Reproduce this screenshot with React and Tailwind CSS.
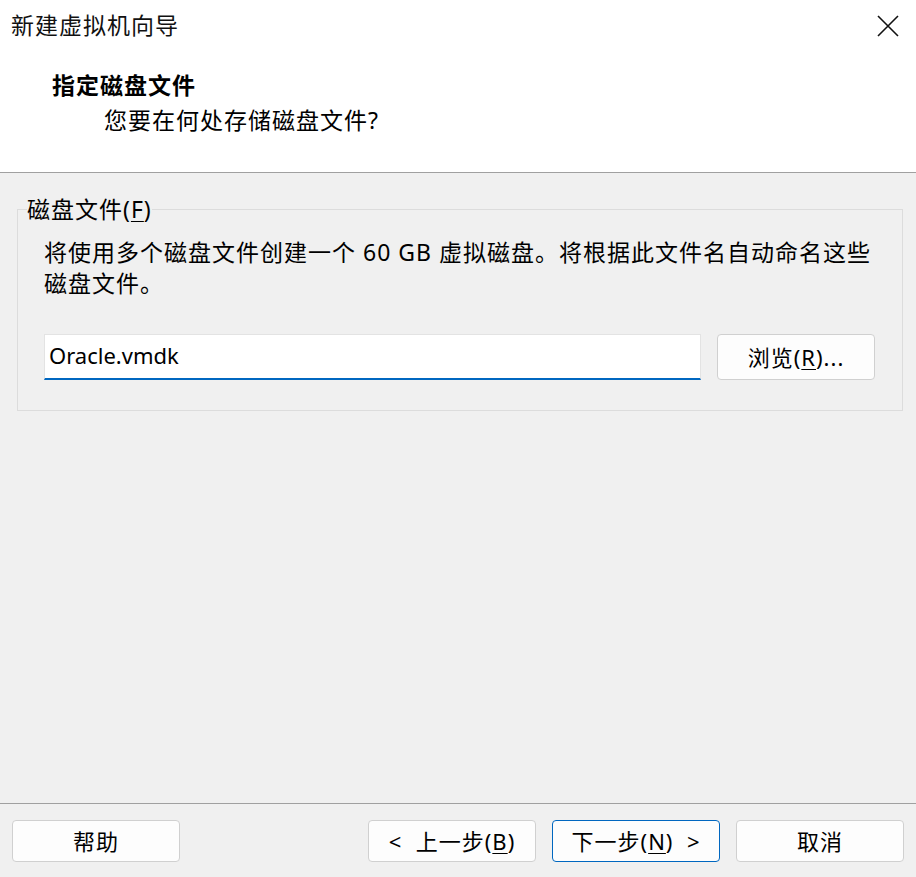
import React from 'react';

const FONT = '"Noto Sans", "Noto Sans CJK SC", sans-serif';

// Accelerator letter, underlined like Win32 mnemonics
function Key({ children }) {
  return <span className="underline underline-offset-[3px] decoration-1">{children}</span>;
}

function WinButton({ children, primary = false, className = '' }) {
  return (
    <button
      className={`h-[42px] w-[168px] rounded-[4px] bg-[#fdfdfd] text-[22px] leading-none tracking-[1px] text-black flex items-center justify-center border ${
        primary ? 'border-[#0067c0]' : 'border-[#d0d0d0]'
      } ${className}`}
    >
      {children}
    </button>
  );
}

export default function App() {
  return (
    <div
      className="w-[916px] h-[877px] bg-[#f0f0f0] flex flex-col text-black overflow-hidden"
      style={{ fontFamily: FONT }}
    >
      {/* Title bar + wizard header */}
      <div className="bg-white h-[173px] border-b border-[#a0a0a0] flex flex-col">
        <div className="h-[50px] flex items-center justify-between pl-[11px] pr-[17px]">
          <span className="text-[23px] leading-none tracking-[1px] text-[#111]">新建虚拟机向导</span>
          <svg width="22" height="22" viewBox="0 0 22 22" className="mt-[1px]">
            <path d="M1 1 L21 21 M21 1 L1 21" stroke="#111" strokeWidth="1.6" fill="none" />
          </svg>
        </div>
        <div className="pl-[52px] pt-[20px] text-[23px] leading-[30px] tracking-[1px] font-bold">指定磁盘文件</div>
        <div className="pl-[104px] mt-[5px] text-[23px] leading-[30px] tracking-[1px]">您要在何处存储磁盘文件?</div>
      </div>

      {/* Content */}
      <div className="flex-1 px-[17px] pt-[21px]">
        <fieldset className="border border-[#dcdcdc]">
          <legend className="ml-[9px] text-[23px] leading-[30px] tracking-[1px]">
            磁盘文件(<Key>F</Key>)
          </legend>
          <div className="pl-[26px] pr-[27px] pb-[30px]">
            <p className="mt-[13px] text-[23px] leading-[31px] tracking-[1px]">
              将使用多个磁盘文件创建一个 60 GB 虚拟磁盘。将根据此文件名自动命名这些磁盘文件。
            </p>
            <div className="mt-[35px] flex gap-[16px]">
              <div className="h-[46px] w-[657px] bg-white border border-[#e3e3e3] border-b-2 border-b-[#0067c0] flex items-center pl-[4px] pb-[4px]">
                <span className="text-[22px] leading-none">Oracle.vmdk</span>
              </div>
              <button className="h-[46px] w-[158px] rounded-[4px] bg-[#fdfdfd] border border-[#d0d0d0] text-[22px] leading-none tracking-[1px] flex items-center justify-center">
                浏览(<Key>R</Key>)...
              </button>
            </div>
          </div>
        </fieldset>
      </div>

      {/* Footer buttons */}
      <div className="h-[74px] border-t border-[#a0a0a0] flex items-start pt-[16px] px-[12px]">
        <WinButton>帮助</WinButton>
        <div className="ml-auto flex gap-[16px]">
          <WinButton>
            &lt;&nbsp; 上一步(<Key>B</Key>)
          </WinButton>
          <WinButton primary>
            下一步(<Key>N</Key>)&nbsp; &gt;
          </WinButton>
          <WinButton>取消</WinButton>
        </div>
      </div>
    </div>
  );
}
